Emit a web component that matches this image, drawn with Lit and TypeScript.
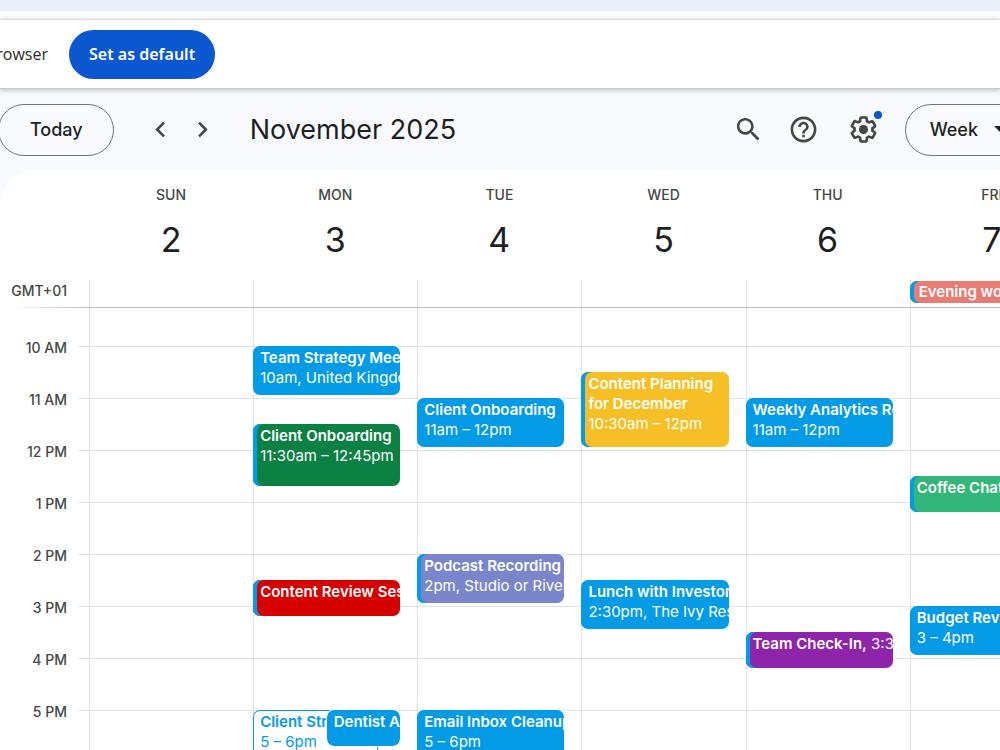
import { LitElement, html, css, svg, nothing } from "lit";
import { customElement, property } from "lit/decorators.js";

interface CalEvent {
  day: number;
  start: number;
  end: number;
  title: string;
  detail?: string;
  tone: string;
  striped?: boolean;
  wrap?: boolean;
  inline?: boolean;
  place?: "under" | "late";
}

const FIRST_HOUR = 9.25;
const LAST_HOUR = 19;

const DAYS = [
  ["Sun", 2], ["Mon", 3], ["Tue", 4], ["Wed", 5], ["Thu", 6], ["Fri", 7], ["Sat", 8],
] as const;

const HOURS = [10, 11, 12, 13, 14, 15, 16, 17, 18];

const EVENTS: CalEvent[] = [
  { day: 1, start: 10, end: 11, title: "Team Strategy Meeting", detail: "10am, United Kingdom", tone: "blue" },
  { day: 1, start: 11.5, end: 12.75, title: "Client Onboarding", detail: "11:30am – 12:45pm", tone: "green", striped: true },
  { day: 1, start: 14.5, end: 15.25, title: "Content Review Session", tone: "red", striped: true },
  { day: 1, start: 17, end: 18, title: "Client Strategy Call", detail: "5 – 6pm", tone: "outline", place: "under" },
  { day: 1, start: 17, end: 17.75, title: "Dentist Appointment", tone: "blue", place: "late" },
  { day: 2, start: 11, end: 12, title: "Client Onboarding", detail: "11am – 12pm", tone: "blue" },
  { day: 2, start: 14, end: 15, title: "Podcast Recording", detail: "2pm, Studio or Riverside", tone: "lavender", striped: true },
  { day: 2, start: 17, end: 18, title: "Email Inbox Cleanup", detail: "5 – 6pm", tone: "blue" },
  { day: 3, start: 10.5, end: 12, title: "Content Planning for December", detail: "10:30am – 12pm", tone: "yellow", striped: true, wrap: true },
  { day: 3, start: 14.5, end: 15.5, title: "Lunch with Investor", detail: "2:30pm, The Ivy Restaurant", tone: "blue" },
  { day: 4, start: 11, end: 12, title: "Weekly Analytics Review", detail: "11am – 12pm", tone: "blue" },
  { day: 4, start: 15.5, end: 16.25, title: "Team Check-In,", detail: "3:30pm", tone: "purple", striped: true, inline: true },
  { day: 5, start: 12.5, end: 13.25, title: "Coffee Chat", tone: "mint", striped: true },
  { day: 5, start: 15, end: 16, title: "Budget Review", detail: "3 – 4pm", tone: "blue" },
];

const row = (hour: number) => Math.round((hour - FIRST_HOUR) * 4) + 1;

const hourLabel = (hour: number) =>
  `${hour > 12 ? hour - 12 : hour} ${hour < 12 ? "AM" : "PM"}`;

const ICONS = {
  prev: svg`<path d="M15.41 7.41 14 6l-6 6 6 6 1.41-1.41L10.83 12z"/>`,
  next: svg`<path d="M10 6 8.59 7.41 13.17 12l-4.58 4.59L10 18l6-6z"/>`,
  search: svg`<path d="M15.5 14h-.79l-.28-.27C15.41 12.59 16 11.11 16 9.5 16 5.91 13.09 3 9.5 3S3 5.91 3 9.5 5.91 16 9.5 16c1.61 0 3.09-.59 4.23-1.57l.27.28v.79l5 4.99L20.49 19l-4.99-5zm-6 0C7.01 14 5 11.99 5 9.5S7.01 5 9.5 5 14 7.01 14 9.5 11.99 14 9.5 14z"/>`,
  help: svg`<path d="M11 18h2v-2h-2v2zm1-16C6.48 2 2 6.48 2 12s4.48 10 10 10 10-4.48 10-10S17.52 2 12 2zm0 18c-4.41 0-8-3.59-8-8s3.59-8 8-8 8 3.59 8 8-3.59 8-8 8zm0-14c-2.21 0-4 1.79-4 4h2c0-1.1.9-2 2-2s2 .9 2 2c0 2-3 1.75-3 5h2c0-2.25 3-2.5 3-5 0-2.21-1.79-4-4-4z"/>`,
  settings: svg`<path d="M13.85 22.25h-3.7c-.74 0-1.36-.54-1.45-1.27l-.27-1.89c-.27-.14-.53-.29-.79-.46l-1.8.72c-.7.26-1.47-.03-1.81-.65L2.2 15.53c-.35-.66-.2-1.44.36-1.88l1.53-1.19c-.01-.15-.02-.3-.02-.46 0-.15.01-.31.02-.46l-1.52-1.19c-.59-.45-.74-1.26-.37-1.88l1.85-3.19c.34-.62 1.11-.9 1.79-.63l1.81.73c.26-.17.52-.32.78-.46l.27-1.91c.09-.7.71-1.25 1.44-1.25h3.7c.74 0 1.36.54 1.45 1.27l.27 1.89c.27.14.53.29.79.46l1.8-.72c.71-.26 1.48.03 1.82.65l1.84 3.18c.36.66.2 1.44-.36 1.88l-1.52 1.19c.01.15.02.3.02.46s-.01.31-.02.46l1.52 1.19c.56.45.72 1.23.37 1.86l-1.86 3.22c-.34.62-1.11.9-1.8.63l-1.8-.72c-.26.17-.52.32-.78.46l-.27 1.91c-.1.68-.72 1.22-1.46 1.22zm-3.23-2h2.76l.37-2.55.53-.22c.44-.18.88-.44 1.34-.78l.45-.34 2.38.96 1.38-2.4-2.03-1.58.07-.56c.03-.26.06-.51.06-.78s-.03-.53-.06-.78l-.07-.56 2.03-1.58-1.39-2.4-2.39.96-.45-.35c-.42-.32-.87-.58-1.33-.77l-.52-.22-.37-2.55h-2.76l-.37 2.55-.53.21c-.44.19-.88.44-1.34.79l-.45.33-2.38-.95-1.39 2.39 2.03 1.58-.07.56a7 7 0 0 0-.06.79c0 .26.02.53.06.78l.07.56-2.03 1.58 1.38 2.4 2.39-.96.45.35c.43.33.86.58 1.33.77l.53.22z"/><circle cx="12" cy="12" r="3.5"/>`,
};

const icon = (name: keyof typeof ICONS) =>
  html`<svg class="icon" viewBox="0 0 24 24" aria-hidden="true">${ICONS[name]}</svg>`;

@customElement("browser-notice")
class BrowserNotice extends LitElement {
  static styles = css`
    :host { display: block; flex: none; }
    .strip { height: 11px; background: #ebeff9; }
    .bar {
      display: flex;
      align-items: center;
      gap: 21px;
      margin-top: 8px;
      height: 68px;
      border-top: 1px solid #dcdee0;
      border-bottom: 1px solid #c6cbcd;
      background: #fff;
      box-shadow: 0 1px 5px rgba(60, 70, 75, 0.35);
    }
    .message {
      display: flex;
      justify-content: flex-end;
      width: 48px;
      overflow: hidden;
      font: 400 16px/24px "Open Sans", "Noto Sans", sans-serif;
      color: #2b2b2b;
    }
    button {
      height: 49px;
      padding: 0 20px;
      border: 0;
      border-radius: 25px;
      background: #0b57d0;
      color: #fff;
      font: 600 16px/24px "Noto Sans", "Open Sans", sans-serif;
      white-space: nowrap;
    }
  `;

  render() {
    return html`
      <div class="strip"></div>
      <div class="bar">
        <span class="message">browser</span>
        <button type="button">Set as default</button>
      </div>
    `;
  }
}

@customElement("calendar-toolbar")
class CalendarToolbar extends LitElement {
  static styles = css`
    :host { display: block; flex: none; }
    .bar {
      display: flex;
      align-items: center;
      height: 81px;
      margin: 0 -33px 0 -2px;
      color: #1f1f1f;
    }
    button {
      display: inline-flex;
      align-items: center;
      justify-content: center;
      flex: none;
      border: 0;
      background: none;
      color: #444746;
      padding: 0;
    }
    .pill {
      height: 52px;
      border: 1px solid #747775;
      border-radius: 26px;
      padding: 0 30px 0 31px;
      color: #1f1f1f;
      font: 500 18px/24px Inter, Roboto, sans-serif;
    }
    .view { gap: 16px; padding: 0 24px; margin-left: 15px; }
    .caret { width: 14px; height: 7px; fill: #1f1f1f; }
    .nav { width: 42px; height: 42px; }
    .steps { display: flex; margin: 0 26px; }
    .tool { position: relative; width: 52px; height: 52px; }
    .tools { display: flex; gap: 3px; margin-left: auto; }
    .settings { margin-left: 5px; }
    .icon { width: 31px; height: 31px; fill: currentColor; }
    .dot {
      position: absolute;
      top: 7px;
      right: 8px;
      width: 8px;
      height: 8px;
      border-radius: 50%;
      background: #0b57d0;
    }
    h1 { margin: 0; font: 400 27px/36px Inter, Roboto, sans-serif; white-space: nowrap; }
  `;

  render() {
    return html`
      <div class="bar">
        <button type="button" class="pill">Today</button>
        <div class="steps">
          <button type="button" class="nav" aria-label="Previous week">${icon("prev")}</button>
          <button type="button" class="nav" aria-label="Next week">${icon("next")}</button>
        </div>
        <h1>November 2025</h1>
        <div class="tools">
          <button type="button" class="tool" aria-label="Search">${icon("search")}</button>
          <button type="button" class="tool" aria-label="Support">${icon("help")}</button>
          <button type="button" class="tool settings" aria-label="Settings">
            ${icon("settings")}<span class="dot"></span>
          </button>
        </div>
        <button type="button" class="pill view">
          Week
          <svg class="caret" viewBox="0 0 14 7" aria-hidden="true"><path d="M0 0h14L7 7z" /></svg>
        </button>
      </div>
    `;
  }
}

@customElement("calendar-event")
class CalendarEvent extends LitElement {
  @property({ attribute: false }) event!: CalEvent;

  static styles = css`
    :host { display: block; min-width: 0; min-height: 0; }
    .card {
      box-sizing: border-box;
      width: 100%;
      height: 100%;
      padding: 2px 0 0 7px;
      border-radius: 7px;
      overflow: hidden;
      white-space: nowrap;
      color: #fff;
      font: 400 15px/20px Inter, Roboto, sans-serif;
    }
    .title { font-weight: 600; }
    .wrap .title { white-space: normal; }
    .title, .detail { display: block; }
    .detail { line-height: 19px; }
    .inline .title, .inline .detail { display: inline; }
    .blue { background: #039be5; }
    .green { background: #0b8043; }
    .red { background: #d50000; }
    .lavender { background: #7986cb; }
    .yellow { background: #f6bf26; }
    .purple { background: #8e24aa; }
    .mint { background: #33b679; }
    .coral { background: #e67c73; padding: 1px 0 1px 9px; }
    .striped { box-shadow: inset 4px 0 #039be5; }
    .outline { background: #fff; color: #039be5; box-shadow: inset 0 0 0 1px #039be5; }
    .late { outline: 1px solid #fff; }
  `;

  render() {
    const e = this.event;
    const names = ["card", e.tone, e.striped && "striped", e.wrap && "wrap", e.inline && "inline", e.place];
    return html`
      <div class=${names.filter(Boolean).join(" ")}>
        <span class="title">${e.title}</span>
        ${e.detail ? html`<span class="detail">${e.detail}</span>` : nothing}
      </div>
    `;
  }
}

@customElement("week-view")
class WeekView extends LitElement {
  static styles = css`
    :host {
      display: block;
      flex: 1;
      min-height: 0;
      overflow: hidden;
      background: #fff;
      border-top-left-radius: 36px;
      font-family: Inter, Roboto, sans-serif;
      color: #444746;
    }
    .row { display: grid; grid-template-columns: 89px minmax(0, 1fr); }
    .days { display: grid; grid-auto-flow: column; grid-auto-columns: calc(100% / 5.55); }
    .head { height: 110px; }
    .day { display: flex; flex-direction: column; align-items: center; padding-top: 15px; gap: 11px; }
    .name { font-size: 14px; line-height: 20px; font-weight: 500; text-transform: uppercase; }
    .date { font-size: 34px; line-height: 48px; color: #1f1f1f; }
    .allday { height: 27px; }
    .zone { padding-right: 22px; text-align: right; font-size: 14px; line-height: 22px; font-weight: 500; }
    .col { box-shadow: inset 1px 0 #dde3ea; }
    .allday .col { padding: 1px 17px 3px 0; }
    .body > * { grid-row: 1; }
    .lines {
      grid-column: 1 / 3;
      margin-left: 78px;
      background: linear-gradient(#dde3ea 1px, transparent 1px) 0 39px / 100% 52px repeat-y;
    }
    .divider {
      grid-column: 1 / 3;
      height: 1px;
      background: linear-gradient(90deg, transparent 10px, #b8bcbb 88px);
    }
    .hours, .slots { display: grid; grid-template-rows: repeat(var(--rows), 13px); }
    .hours { grid-column: 1; padding-right: 22px; }
    .hour { align-self: center; text-align: right; font-size: 14px; line-height: 20px; padding-top: 4px; font-weight: 500; }
    .body .days { grid-column: 2; }
    .slots { grid-template-columns: minmax(0, 1fr) minmax(0, 1fr); padding-right: 17px; }
    .slots calendar-event { grid-column: 1 / 3; margin-bottom: 3px; }
    .slots .under { margin-right: 22px; }
    .slots .late { grid-column: 2; }
  `;

  render() {
    const rows = (LAST_HOUR - FIRST_HOUR) * 4;
    const evening = { day: 5, start: 0, end: 0, title: "Evening workout", tone: "coral", striped: true };
    return html`
      <div class="row head">
        <span></span>
        <div class="days">
          ${DAYS.map(([name, date]) => html`
            <div class="day"><span class="name">${name}</span><span class="date">${date}</span></div>`)}
        </div>
      </div>
      <div class="row allday">
        <span class="zone">GMT+01</span>
        <div class="days">
          ${DAYS.map((_, d) => html`
            <div class="col">${d === 5 ? html`<calendar-event .event=${evening}></calendar-event>` : nothing}</div>`)}
        </div>
      </div>
      <div class="row body" style="--rows:${rows}">
        <div class="lines"></div>
        <div class="hours">
          ${HOURS.map((h) => html`<span class="hour" style="grid-row:${row(h) - 1} / span 2">${hourLabel(h)}</span>`)}
        </div>
        <div class="days">
          ${DAYS.map((_, d) => html`
            <div class="col slots">
              ${EVENTS.filter((e) => e.day === d).map((e) => html`
                <calendar-event
                  class=${e.place ?? ""}
                  style="grid-row:${row(e.start)} / ${row(e.end)}"
                  .event=${e}
                ></calendar-event>`)}
            </div>`)}
        </div>
        <div class="divider"></div>
      </div>
    `;
  }
}

@customElement("app-root")
class AppRoot extends LitElement {
  static styles = css`
    :host {
      display: flex;
      flex-direction: column;
      height: 100vh;
      overflow: hidden;
      background: linear-gradient(#fff 40px, #f8fafd 40px);
    }
  `;

  render() {
    return html`
      <browser-notice></browser-notice>
      <calendar-toolbar></calendar-toolbar>
      <week-view></week-view>
    `;
  }
}
